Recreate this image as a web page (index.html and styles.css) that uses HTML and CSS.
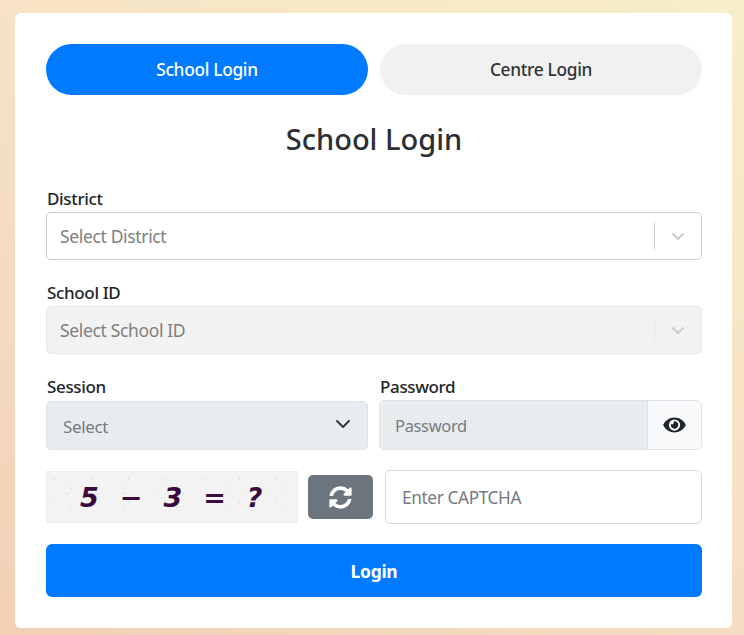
FILE: index.html
```html
<!DOCTYPE html>
<html lang="en">
<head>
<meta charset="utf-8">
<title>School Login</title>
<link rel="stylesheet" href="styles.css">
</head>
<body>
<main class="card">
  <div class="tabs">
    <button class="tab tab-active" type="button">School Login</button>
    <button class="tab" type="button">Centre Login</button>
  </div>
  <h1 class="title">School Login</h1>
  <div class="field">
    <label class="label">District</label>
    <div class="picker">
      <span class="picker-text">Select District</span>
      <span class="picker-sep"></span>
      <svg class="picker-arrow" viewBox="0 0 20 20"><path d="M4.5 7.5 10 13l5.5-5.5" fill="none" stroke="currentColor" stroke-width="2.2"/></svg>
    </div>
  </div>
  <div class="field">
    <label class="label">School ID</label>
    <div class="picker picker-disabled">
      <span class="picker-text">Select School ID</span>
      <span class="picker-sep"></span>
      <svg class="picker-arrow" viewBox="0 0 20 20"><path d="M4.5 7.5 10 13l5.5-5.5" fill="none" stroke="currentColor" stroke-width="2.2"/></svg>
    </div>
  </div>
  <div class="row">
    <div class="col col-session">
      <label class="label label-tight">Session</label>
      <div class="session">
        <span class="session-text">Select</span>
        <svg class="session-arrow" viewBox="0 0 16 16"><path d="m2 5 6 6 6-6" fill="none" stroke="#343a40" stroke-width="2" stroke-linecap="round" stroke-linejoin="round"/></svg>
      </div>
    </div>
    <div class="col">
      <label class="label label-tight">Password</label>
      <div class="pass">
        <input class="pass-input" type="password" placeholder="Password">
        <span class="pass-eye">
          <svg class="eye" viewBox="0 0 576 512"><path d="M572.52 241.4C518.29 135.59 410.93 64 288 64S57.68 135.64 3.48 241.41a32.35 32.35 0 0 0 0 29.19C57.71 376.41 165.07 448 288 448s230.32-71.64 284.52-177.41a32.35 32.35 0 0 0 0-29.19zM288 400a144 144 0 1 1 144-144 143.93 143.93 0 0 1-144 144zm0-240a95.31 95.31 0 0 0-25.31 3.79 47.85 47.85 0 0 1-66.9 66.9A95.78 95.78 0 1 0 288 160z"/></svg>
        </span>
      </div>
    </div>
  </div>
  <div class="captcha-row">
    <div class="captcha"><span>5</span><span>−</span><span>3</span><span>=</span><span>?</span></div>
    <button class="refresh" type="button" aria-label="Refresh">
      <svg class="sync" viewBox="0 0 512 512"><path d="M370.72 133.28C339.458 104.008 298.888 87.962 255.848 88c-77.458.068-144.328 53.178-162.791 126.85-1.344 5.363-6.122 9.15-11.651 9.15H24.103c-7.498 0-13.194-6.807-11.807-14.176C33.933 94.924 134.813 8 256 8c66.448 0 126.791 26.136 171.315 68.685L463.03 40.97C478.149 25.851 504 36.559 504 57.941V192c0 13.255-10.745 24-24 24H345.941c-21.382 0-32.09-25.851-16.971-40.971l41.75-41.749zM32 296h134.059c21.382 0 32.09 25.851 16.971 40.971l-41.75 41.75c31.262 29.273 71.835 45.319 114.876 45.28 77.418-.07 144.315-53.144 162.787-126.849 1.344-5.363 6.122-9.15 11.651-9.15h57.304c7.498 0 13.194 6.807 11.807 14.176C478.067 417.076 377.187 504 256 504c-66.448 0-126.791-26.136-171.315-68.685L48.97 471.03C33.851 486.149 8 475.441 8 454.059V320c0-13.255 10.745-24 24-24z"/></svg>
    </button>
    <input class="captcha-input" type="text" placeholder="Enter CAPTCHA">
  </div>
  <button class="login" type="button">Login</button>
</main>
</body>
</html>
```
FILE: styles.css
```css
* { box-sizing: border-box; }
html, body { height: 100%; }
body {
  margin: 0;
  padding: 13px 12px 7px 15px;
  overflow: hidden;
  background: linear-gradient(30deg, #f2d0b6 0%, #f5dfc2 45%, #f8eecb 100%);
  font-family: "Noto Sans", "Open Sans", sans-serif;
  color: #212529;
}
.card {
  background: #fff;
  border-radius: 6px;
  height: 615px;
  padding: 31px 30px 0 31px;
}
.tabs { display: flex; gap: 12px; }
.tab {
  flex: 1;
  height: 51px;
  border: 0;
  border-radius: 26px;
  background: #f1f1f1;
  color: #2f3338;
  font: 500 17.3px/1 "Noto Sans", sans-serif;
  letter-spacing: -0.3px;
}
.tab-active { background: #007bff; color: #fff; }
.title {
  margin: 25px 0 0;
  height: 37px;
  font-size: 29px;
  line-height: 37px;
  font-weight: 500;
  text-align: center;
  color: #2b2f33;
}
.field { margin-bottom: 21px; }
.title + .field { margin-top: 30px; }
.label {
  display: block;
  height: 24px;
  line-height: 24px;
  padding-left: 1px;
  font-size: 17px;
  font-weight: 500;
  letter-spacing: -0.35px;
  margin-bottom: 1px;
  color: #212529;
}
.picker {
  display: flex;
  align-items: center;
  height: 48px;
  padding-left: 13px;
  border: 1px solid #ccc;
  border-radius: 5px;
  background: #fff;
}
.picker-text { flex: 1; font-size: 17.5px; letter-spacing: -0.35px; color: #808080; }
.picker-sep { width: 1px; height: 26px; background: #ccc; }
.picker-arrow { width: 20px; height: 20px; margin: 0 13px 0 13px; color: #ccc; }
.picker-disabled { background: #f2f2f2; border-color: #e6e6e6; }
.picker-disabled .picker-text { color: #808080; }
.picker-disabled .picker-sep { background: #e6e6e6; }
.row { display: flex; gap: 11px; margin-top: 20px; }
.col { flex: 1; min-width: 0; }
.col-session { flex: 0 0 322px; }
.label-tight { height: 24px; margin-bottom: 1px; }
.session {
  display: flex;
  align-items: center;
  justify-content: space-between;
  height: 49px;
  margin-top: 2px;
  padding: 2px 16px 0 16px;
  background: #e9ecef;
  border: 1px solid #dee2e6;
  border-radius: 5px;
}
.session-text { font-size: 17px; letter-spacing: -0.35px; color: #757b82; }
.session-arrow { width: 16px; height: 16px; margin-top: -5px; }
.pass {
  display: flex;
  height: 50px;
  margin-top: 1px;
  border: 1px solid #dee2e6;
  border-radius: 5px;
  overflow: hidden;
}
.pass-input {
  flex: 1;
  min-width: 0;
  border: 0;
  outline: 0;
  padding: 0 15px;
  background: #e9ecef;
  font: 16.5px "Noto Sans", sans-serif;
  letter-spacing: -0.35px;
}
.pass-input::placeholder, .captcha-input::placeholder { color: #757b82; opacity: 1; }
.pass-eye {
  display: flex;
  align-items: center;
  justify-content: center;
  width: 54px;
  background: #f8f9fa;
  border-left: 1px solid #dee2e6;
}
.eye { width: 23px; height: 20px; fill: #212529; }
.captcha-row {
  display: flex;
  align-items: center;
  margin-top: 20px;
}
.captcha {
  display: flex;
  align-items: center;
  gap: 21px;
  width: 252px;
  height: 52px;
  padding: 0 0 0 33px;
  border: 1px solid #ececec;
  background-color: #f3f3f3;
  background-image:
    radial-gradient(circle at 20% 30%, #dedede 0 0.6px, transparent 1px),
    radial-gradient(circle at 70% 70%, #e0e0e0 0 0.6px, transparent 1px),
    radial-gradient(circle at 45% 85%, #e2e2e2 0 0.6px, transparent 1px);
  background-size: 37px 23px, 29px 31px, 53px 19px;
  font: italic 700 27px/1 "DejaVu Sans", sans-serif;
  color: #3a0a3c;
}
.refresh {
  display: flex;
  align-items: center;
  justify-content: center;
  width: 65px;
  height: 44px;
  margin: 0 12px 0 10px;
  padding: 0;
  border: 0;
  border-radius: 5px;
  background: #6c757d;
}
.sync { width: 23px; height: 23px; fill: #fff; }
.captcha-input {
  flex: 1;
  min-width: 0;
  height: 54px;
  padding: 0 16px;
  border: 1px solid #d5d8dc;
  border-radius: 5px;
  outline: 0;
  font: 17.2px "Noto Sans", sans-serif;
  letter-spacing: -0.35px;
}
.login {
  display: block;
  width: 100%;
  height: 53px;
  margin-top: 20px;
  padding: 2px 0 0;
  border: 0;
  border-radius: 6px;
  background: #007bff;
  color: #fff;
  font: 700 17.5px/1 "Noto Sans", sans-serif;
  letter-spacing: -0.3px;
}
```
